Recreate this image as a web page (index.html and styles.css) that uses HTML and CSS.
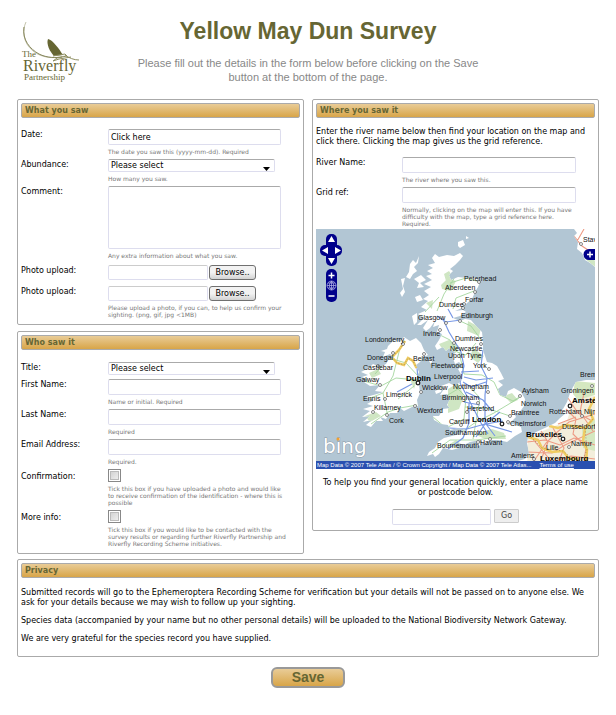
FILE: index.html
```html
<!DOCTYPE html>
<html lang="en">
<head>
<meta charset="utf-8">
<title>Yellow May Dun Survey</title>
<link rel="stylesheet" href="styles.css">
</head>
<body>
<header class="masthead">
  <svg class="logo" viewBox="0 0 60 64" role="img" aria-label="The Riverfly Partnership">
    <path d="M5 1C1 9 2 22 12 30C21 37 32 38 44 35" fill="none" stroke="#c4c4ac" stroke-width="1"/>
    <path d="M3 6C1 19 9 28 18 33C26 37 35 37 41 36" fill="none" stroke="#85855a" stroke-width="1"/>
    <path d="M27 18C32 19 38 28 42 34L33 35C29 31 25 23 27 18Z" fill="#666633"/>
    <path d="M32 35L44 33L46 35L36 37L32 40L38 38L50 36M44 34C48 37 53 39 58 39" fill="none" stroke="#8f8f62" stroke-width="1"/>
    <text class="logo-the" x="1" y="36">The</text>
    <text class="logo-name" x="2" y="50">Riverfly</text>
    <text class="logo-sub" x="3" y="59">Partnership</text>
  </svg>
  <div class="intro">
    <h1>Yellow May Dun Survey</h1>
    <p>Please fill out the details in the form below before clicking on the Save button at the bottom of the page.</p>
  </div>
</header>

<form class="survey">
  <div class="columns">
    <div class="column">
      <section class="panel">
        <h2>What you saw</h2>
        <div class="rows">
          <div class="row">
            <label for="date">Date:</label>
            <div class="field"><input id="date" type="text" value="Click here"><p class="hint">The date you saw this (yyyy-mm-dd). Required</p></div>
          </div>
          <div class="row">
            <label for="abundance">Abundance:</label>
            <div class="field"><select id="abundance"><option>Please select</option></select><p class="hint">How many you saw.</p></div>
          </div>
          <div class="row">
            <label for="comment">Comment:</label>
            <div class="field"><textarea id="comment"></textarea><p class="hint">Any extra information about what you saw.</p></div>
          </div>
          <div class="row upload">
            <label for="photo1">Photo upload:</label>
            <div class="field"><div class="file"><input id="photo1" type="text"><button type="button">Browse..</button></div></div>
          </div>
          <div class="row upload">
            <label for="photo2">Photo upload:</label>
            <div class="field"><div class="file"><input id="photo2" type="text"><button type="button">Browse..</button></div><p class="hint">Please upload a photo, if you can, to help us confirm your sighting. (png, gif, jpg &lt;1MB)</p></div>
          </div>
        </div>
      </section>

      <section class="panel who">
        <h2>Who saw it</h2>
        <div class="rows">
          <div class="row">
            <label for="title">Title:</label>
            <div class="field"><select id="title"><option>Please select</option></select></div>
          </div>
          <div class="row">
            <label for="first">First Name:</label>
            <div class="field"><input id="first" type="text"><p class="hint">Name or initial. Required</p></div>
          </div>
          <div class="row">
            <label for="last">Last Name:</label>
            <div class="field"><input id="last" type="text"><p class="hint">Required</p></div>
          </div>
          <div class="row">
            <label for="email">Email Address:</label>
            <div class="field"><input id="email" type="text"><p class="hint">Required.</p></div>
          </div>
          <div class="row tick">
            <label for="confirm">Confirmation:</label>
            <div class="field"><input id="confirm" type="checkbox"><p class="hint">Tick this box if you have uploaded a photo and would like<br>to receive confirmation of the identification - where this is<br>possible</p></div>
          </div>
          <div class="row tick">
            <label for="more">More info:</label>
            <div class="field"><input id="more" type="checkbox"><p class="hint">Tick this box if you would like to be contacted with the<br>survey results or regarding further Riverfly Partnership and<br>Riverfly Recording Scheme initiatives.</p></div>
          </div>
        </div>
      </section>
    </div>

    <section class="panel where">
      <h2>Where you saw it</h2>
      <p class="lead">Enter the river name below then find your location on the map and click there. Clicking the map gives us the grid reference.</p>
      <div class="rows">
        <div class="row">
          <label for="river">River Name:</label>
          <div class="field"><input id="river" type="text"><p class="hint">The river where you saw this.</p></div>
        </div>
        <div class="row">
          <label for="grid">Grid ref:</label>
          <div class="field"><input id="grid" type="text"><p class="hint">Normally, clicking on the map will enter this. If you have<br>difficulty with the map, type a grid reference here.<br>Required.</p></div>
        </div>
      </div>
      <div class="map">
        <svg class="map-art" viewBox="0 0 279 240" role="img" aria-label="Map of Britain and Ireland">
          <defs>
            <clipPath id="land-clip"><use href="#land"/></clipPath>
          </defs>
          <rect width="279" height="240" fill="#b2c6d4"/>
          <path id="land" fill="#fff" d="M116 29L119 25L123 28L131 26L138 27L144 24L147 27L144 31L139 36L134 40L137 42L133 46L135 51L142 48L151 49L159 48L164 53L162 58L159 63L156 70L151 74L146 79L139 82L147 81L150 83L144 87L137 89L144 92L149 90L155 91L160 97L166 103L167 112L167 121L171 133L176 134L181 137L185 144L188 150L182 152L187 156L182 160L184 166L190 168L192 162L198 159L205 163L209 170L208 177L203 184L198 184L200 188L195 193L191 196L198 195L205 198L206 203L199 207L191 213L182 211L174 211L169 215L164 211L154 213L148 216L142 214L137 216L143 219L136 221L127 219L123 225L119 228L117 225L111 227L113 223L119 219L122 213L128 209L136 207L144 205L148 200L142 199L134 201L132 196L125 195L118 191L117 187L123 187L127 180L134 179L131 176L134 170L131 165L124 166L128 160L125 157L133 154L139 157L144 153L146 147L142 140L147 137L143 133L139 135L137 129L139 123L133 119L130 122L127 118L121 121L119 117L123 111L126 105L121 103L123 96L117 98L119 92L114 99L110 102L107 99L112 91L105 96L101 96L108 89L102 85L111 81L105 78L112 72L107 70L113 66L108 62L115 58L108 55L116 51L110 47L116 45L111 42L117 39L112 36L119 34Z
          M72 117L78 111L84 113L88 108L94 112L100 109L105 114L108 121L112 126L108 128L104 133L100 136L103 143L101 148L103 156L104 164L101 171L102 177L96 178L88 182L84 179L81 184L74 184L70 190L64 188L67 192L60 192L55 198L50 196L56 191L47 193L54 187L46 188L54 182L47 180L57 177L51 175L58 171L50 168L61 165L67 163L59 162L64 156L54 157L48 153L53 151L46 148L52 146L45 143L53 139L57 135L64 138L70 135L73 130L78 129L74 125L67 128L69 123L65 122L71 120Z
          M94 35L97 31L100 34L103 27L102 34L98 38L101 42L97 45L94 50L90 48L93 43ZM98 50L105 46L110 51L104 54L108 58L101 59L103 54ZM85 50L89 49L87 57L89 63L86 68L84 64L87 60ZM142 13L147 11L149 16L144 19L142 17ZM150 7L153 9L150 10ZM99 68L104 66L107 71L101 73ZM96 87L101 84L101 93L98 96ZM113 132L117 130L115 135ZM119 162L126 159L125 163L120 165ZM159 215L166 214L163 217Z
          M258 0L261 4L258 7L262 13L261 20L266 24L269 31L274 34L279 38L279 0ZM279 151L270 151L260 153L257 158L254 164L251 173L247 180L243 184L250 184L244 189L239 194L231 198L220 203L212 208L211 214L213 224L209 230L198 233L203 240L279 240Z"/>
          <g clip-path="url(#land-clip)">
            <g fill="#cfe6c3">
              <path d="M123 115L133 111L143 117L140 124L127 121ZM152 92L165 99L163 107L151 102ZM157 119L168 127L162 134L154 128ZM132 160L142 154L148 167L143 180L132 184ZM131 217L140 211L145 215L139 219ZM176 200L188 204L190 210L169 210L158 205ZM125 56L132 49L140 52L135 62L126 60ZM273 24L279 32V38L268 29ZM188 167L196 164L202 171L195 174Z"/>
              <path d="M49 187L60 183L65 187L54 193ZM53 144L62 140L65 145L56 149ZM94 150L101 151L98 160ZM128 45L133 42L137 48L130 52ZM110 74L117 71L116 80Z"/>
            </g>
            <path fill="#f0ead2" d="M212 208L251 192L258 169L279 167V240H211Z" opacity=".8"/>
            <path fill="#d5e8c0" d="M259 152L279 154V166L262 171L257 165ZM266 200L279 190V222L267 219Z"/>
            <path fill="none" stroke="#a5d69e" stroke-width=".9" d="M141 45L128 65L121 82M134 54L150 49L164 53M137 80L140 69L158 62M118 103L134 111L141 123L150 126L160 114M144 92L155 97L166 112M143 123L148 145L166 146L178 153L184 166L197 172L205 167M130 167L142 160L150 168L148 190L130 199L117 188M143 205L160 193L178 184L203 169M116 224L134 211L160 211L190 207M149 178L170 179L194 187M151 155L164 169L157 210M48 152L65 157L80 149L101 151M59 145L73 129L90 134L103 148M55 195L72 183L84 179L101 176M52 170L67 164L77 147L84 119M67 164L72 188M82 170L98 157M123 68L109 83"/>
            <path fill="none" stroke="#7898e5" stroke-width="1.2" d="M121 87L130 93L145 91M127 90L133 103L145 123L148 137L144 154L153 171L165 194L172 205M132 80L137 89M167 121L165 137L171 149L169 166L169 180L169 195L196 203M148 148L160 151L177 149M145 143L163 142M133 199L151 200L169 195L184 183M150 163L167 171L176 182M132 220L147 209L153 194L153 174M102 151L101 138M81 163L96 155M160 208L169 195M148 173L164 176M147 153L155 158L170 153M170 195L187 192M170 195L179 207"/>
            <path fill="none" stroke="#ed9a84" stroke-width="1.1" d="M258 7L266 17L278 25M268 0L260 14M211 213L229 211L244 216L258 209L279 216M218 232L230 214L239 205L253 193L279 185M215 208L236 233L255 227L279 230M252 169L262 184L276 192M250 180L260 190L257 205L270 218L267 240M225 202L232 213L225 231M237 199L248 219L240 240M268 164L264 183L277 202M211 223L236 224L249 216L279 202M260 188L242 195M270 173L279 170"/>
            <path fill="none" stroke="#f0cc62" stroke-width="2.5" d="M89 112L83 121L76 128L81 134L88 136L92 129L97 132L100 138L106 136M212 208L222 211L226 219L236 223L247 222L253 230L260 229L264 236L270 233L271 221L267 212L269 199L263 198L251 196L242 199L233 197M270 198L277 190L273 180L279 168"/>
            <path fill="none" stroke="#8d804b" stroke-width=".7" stroke-dasharray="1 2" d="M89 112L83 121L76 128L81 134L88 136L92 129L97 132L100 138L106 136M215 208L226 219L247 222L264 236L271 221L269 199L277 190"/>
          </g>
          <g fill="#fff" stroke="#555" stroke-width=".7">
            <circle cx="163" cy="53" r="1.5"/><circle cx="159" cy="63" r="1.5"/><circle cx="148" cy="75" r="1.5"/><circle cx="147" cy="79" r="1.5"/><circle cx="144" cy="92" r="1.5"/><circle cx="130" cy="94" r="1.5"/><circle cx="124" cy="101" r="1.5"/><circle cx="87" cy="115" r="1.5"/><circle cx="138" cy="114" r="1.5"/><circle cx="165" cy="115" r="1.5"/><circle cx="173" cy="140" r="1.5"/><circle cx="172" cy="163" r="1.5"/><circle cx="204" cy="167" r="1.5"/><circle cx="162" cy="174" r="1.5"/><circle cx="151" cy="183" r="1.5"/><circle cx="194" cy="187" r="1.5"/><circle cx="192" cy="193" r="1.5"/><circle cx="145" cy="196" r="1.5"/><circle cx="162" cy="213" r="1.5"/><circle cx="174" cy="210" r="1.5"/><circle cx="105" cy="163" r="1.5"/><circle cx="99" cy="177" r="1.5"/><circle cx="71" cy="186" r="1.5"/><circle cx="57" cy="183" r="1.5"/><circle cx="69" cy="170" r="1.5"/><circle cx="64" cy="156" r="1.5"/><circle cx="62" cy="137" r="1.5"/><circle cx="77" cy="124" r="1.5"/><circle cx="108" cy="125" r="1.5"/><circle cx="265" cy="15" r="1.5"/><circle cx="276" cy="157" r="1.5"/><circle cx="253" cy="218" r="1.5"/><circle cx="266" cy="187" r="1.5"/><circle cx="218" cy="230" r="1.5"/>
          </g>
          <g fill="#fff" stroke="#222" stroke-width="1.3"><circle cx="102" cy="154" r="1.8"/><circle cx="186" cy="195" r="1.8"/><circle cx="247" cy="210" r="1.8"/><circle cx="254" cy="177" r="1.8"/></g>
          <g class="towns">
            <text x="148" y="52">Peterhead</text><text x="129" y="61">Aberdeen</text><text x="149" y="73">Forfar</text><text x="123" y="78">Dundee</text><text x="145" y="89">Edinburgh</text><text x="102" y="91">Glasgow</text><text x="107" y="107">Irvine</text><text x="139" y="112">Dumfries</text><text x="49" y="113">Londonderry</text><text x="134" y="122">Newcastle</text><text x="132" y="129">Upon Tyne</text><text x="51" y="131">Donegal</text><text x="97" y="132">Belfast</text><text x="47" y="141">Castlebar</text><text x="115" y="139">Fleetwood</text><text x="157" y="139">York</text><text x="40" y="153">Galway</text><text x="118" y="150">Liverpool</text><text x="106" y="161">Wicklow</text><text x="137" y="160">Nottingham</text><text x="70" y="168">Limerick</text><text x="126" y="171">Birmingham</text><text x="47" y="172">Ennis</text><text x="58" y="181">Killarney</text><text x="101" y="184">Wexford</text><text x="151" y="182">Hereford</text><text x="73" y="194">Cork</text><text x="133" y="195">Cardiff</text><text x="206" y="164">Aylsham</text><text x="205" y="177">Norwich</text><text x="195" y="186">Braintree</text><text x="194" y="197">Chelmsford</text><text x="129" y="206">Southampton</text><text x="121" y="219">Bournemouth</text><text x="164" y="216">Havant</text><text x="267" y="13">Stav</text><text x="264" y="148">Brem</text><text x="245" y="164">Groningen</text><text x="233" y="185">Rotterdam</text><text x="268" y="185">Nijm</text><text x="246" y="200">Dusseldorf</text><text x="230" y="221">Lille</text><text x="255" y="217">Namur</text><text x="195" y="229">Amiens</text>
          </g>
          <g class="capitals">
            <text x="90" y="152">Dublin</text><text x="156" y="193">London</text><text x="256" y="174">Amste</text><text x="210" y="208">Bruxelles</text><text x="224" y="232">Luxembourg</text>
          </g>
          <text class="bing" x="7" y="224">bing</text>
          <circle cx="22" cy="210" r="1.5" fill="#f0a030"/>
          <g fill="#00008b">
            <rect x="10" y="5" width="11" height="32" rx="5"/><rect x="4" y="16" width="22" height="11" rx="5"/><rect x="10" y="40" width="11" height="33" rx="5"/>
            <path d="M279 20H273A5 5 0 0 0 273 31H279Z"/>
          </g>
          <path fill="#fff" d="M15.5 7L19 13H12ZM15.5 35L12 29H19ZM6 21.5L12 18V25ZM25 21.5L19 18V25Z"/>
          <path fill="none" stroke="#fff" stroke-width="1.5" d="M12.5 46.5H18.5M15.5 43.5V49.5M12.5 67H18.5M271 25.5H277M274 22.5V28.5"/>
          <path fill="none" stroke="#b9b9e8" stroke-width=".7" d="M15.5 52A4.5 4.5 0 1 0 15.5 61A4.5 4.5 0 1 0 15.5 52M15.5 52V61M11 56.5H20M12 54H19M12 59H19M15.5 52Q11 56.5 15.5 61Q20 56.5 15.5 52"/>
        </svg>
        <div class="pan">
          <button class="north" type="button" aria-label="Pan north"></button>
          <button class="west" type="button" aria-label="Pan west"></button>
          <button class="east" type="button" aria-label="Pan east"></button>
          <button class="south" type="button" aria-label="Pan south"></button>
        </div>
        <div class="zoom">
          <button type="button" aria-label="Zoom in"></button>
          <button type="button" aria-label="Zoom to whole map"></button>
          <button type="button" aria-label="Zoom out"></button>
        </div>
        <button class="layers" type="button" aria-label="Show layers"></button>
        <div class="credits"><span>Map Data © 2007 Tele Atlas / © Crown Copyright / Map Data © 2007 Tele Atlas...</span><a href="#terms">Terms of use</a></div>
      </div>
      <p class="lead find"><label for="place">To help you find your general location quickly, enter a place name or postcode below.</label></p>
      <div class="search"><input id="place" type="text"><button type="button">Go</button></div>
    </section>
  </div>

  <section class="panel privacy">
    <h2>Privacy</h2>
    <div class="policy">
      <p>Submitted records will go to the Ephemeroptera Recording Scheme for verification but your details will not be passed on to anyone else. We ask for your details because we may wish to follow up your sighting.</p>
      <p>Species data (accompanied by your name but no other personal details) will be uploaded to the National Biodiversity Network Gateway.</p>
      <p>We are very grateful for the species record you have supplied.</p>
    </div>
  </section>
  <button class="save" type="button">Save</button>
</form>
</body>
</html>
```
FILE: styles.css
```css
* { box-sizing: border-box; }
body {
  margin: 0;
  padding: 0 17px 24px;
  background: #fff;
  color: #000;
  font: 8px/10px "DejaVu Sans", Verdana, sans-serif;
}
h1, h2, p { margin: 0; }
input, select, textarea, button { margin: 0; font: inherit; color: inherit; }

.masthead {
  position: relative;
  padding-top: 17px;
  min-height: 99px;
}
.logo { position: absolute; left: 4px; top: 21px; width: 60px; height: 64px; }
.logo text { font-family: "Liberation Serif", serif; fill: #666633; }
.logo-the { font-size: 9px; }
.logo-name { font-size: 16px; }
.logo-sub { font-size: 9px; }
.intro {
  max-width: 360px;
  margin: 0 auto;
  text-align: center;
  font-family: "Liberation Sans", Arial, sans-serif;
}
h1 { font-size: 23px; line-height: 28px; color: #666633; white-space: nowrap; }
.intro p { margin-top: 11px; font-size: 11px; line-height: 14px; color: #888; }

.columns { display: grid; grid-template-columns: 1fr 1fr; gap: 8px; align-items: start; }
.column { display: flex; flex-direction: column; gap: 6px; }
.panel { min-width: 0; padding: 3px 3px 6px; border: 1px solid #aaa; border-radius: 2px; }
h2 {
  height: 15px;
  padding: 0 3px;
  border: 1px solid #aaa;
  border-radius: 2px;
  background: linear-gradient(#e9cc97, #d8a548);
  color: #666633;
  font-size: 8px;
  line-height: 13px;
}
.rows { display: flex; flex-direction: column; gap: 4px; margin-top: 11px; }
.who .rows { margin-top: 12px; }
.row { display: grid; grid-template-columns: 87px 1fr; }
.row label { padding-top: 1px; }
.tick label { padding-top: 3px; }
.upload { margin-top: 2px; }
.field { min-width: 0; }
.hint { margin-top: 3px; color: #777; font-size: 6px; line-height: 7px; }

input, select, textarea {
  display: block;
  border: 1px solid #dde;
  border-top-color: #aaa;
  border-radius: 2px;
  background: #fff;
}
input { width: 173px; height: 16px; padding: 0 2px; }
textarea { width: 173px; height: 63px; resize: none; }
select {
  appearance: none;
  width: 167px;
  height: 13px;
  padding: 0 2px;
  background: #fff url("data:image/svg+xml,%3Csvg xmlns='http://www.w3.org/2000/svg' width='7' height='4'%3E%3Cpath d='M0 0h7L3.5 4z'/%3E%3C/svg%3E") no-repeat right 4px bottom 0;
}
input[type="checkbox"] {
  appearance: none;
  width: 13px;
  height: 13px;
  border: 1px solid #888;
  border-radius: 0;
  background: linear-gradient(135deg, #ccc, #f5f5f5);
  box-shadow: inset 0 0 0 1px #fff, inset 0 0 0 2px #bbb;
}
.file { display: flex; gap: 1px; }
.file input { width: 100px; height: 15px; border-top-color: #ccc; }
.file button {
  width: 47px;
  height: 15px;
  padding: 0;
  border: 1px solid #707070;
  border-radius: 3px;
  background: linear-gradient(#f2f2f2 50%, #d2d2d2);
}

.lead { margin-top: 9px; }
.where { padding-bottom: 5px; }
.where .rows { margin-top: 10px; }
.where .row { grid-template-columns: 86px 1fr; }
.where .row input { width: 174px; }
.map { position: relative; margin-top: 2px; }
.map-art { display: block; width: 100%; }
.towns { font: 7px "Liberation Sans", Arial, sans-serif; fill: #111; }
.capitals { font: bold 8px "Liberation Sans", Arial, sans-serif; fill: #000; }
.bing {
  font: 20px "DejaVu Sans", sans-serif;
  fill: #fff;
  stroke: #8b99a5;
  stroke-width: 1px;
  paint-order: stroke;
}
.map button { padding: 0; border: 0; background: none; }
.pan {
  position: absolute;
  left: 4px;
  top: 5px;
  display: grid;
  grid-template: "n n" 11px "w e" 11px "s s" 11px / 11px 11px;
}
.north { grid-area: n; }
.west { grid-area: w; }
.east { grid-area: e; }
.south { grid-area: s; }
.zoom { position: absolute; left: 10px; top: 40px; display: grid; grid-template: repeat(3, 11px) / 11px; }
.layers { position: absolute; right: 0; top: 20px; width: 11px; height: 11px; }
.credits {
  position: absolute;
  left: 0;
  right: 0;
  bottom: 0;
  display: flex;
  gap: 8px;
  padding: 0 1px;
  overflow: hidden;
  background: #2a50b0;
  color: #fff;
  font: 6px/8px "Liberation Sans", Arial, sans-serif;
  white-space: nowrap;
}
.credits a { color: inherit; }
.find { padding: 0 3px; text-align: center; }
.search { display: flex; justify-content: center; gap: 3px; margin-top: 11px; }
.search input { width: 99px; }
.search button {
  width: 25px;
  height: 14px;
  padding: 0;
  border: 1px solid #ccc;
  border-radius: 1px;
  background: #eee;
  color: #444;
}

.privacy { margin-top: 5px; padding-bottom: 12px; }
.policy { display: grid; gap: 8px; margin-top: 10px; }
.save {
  display: block;
  width: 74px;
  height: 21px;
  margin: 10px auto 0;
  padding: 0;
  border: 2px solid #999;
  border-radius: 6px;
  background: linear-gradient(#e9cc97, #d8a548);
  color: #666633;
  font: bold 14px/17px "Liberation Sans", Arial, sans-serif;
}
```
